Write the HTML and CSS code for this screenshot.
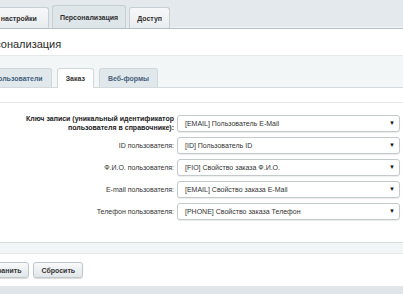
FILE: index.html
```html
<!DOCTYPE html>
<html lang="ru">
<head>
    <meta charset="UTF-8">
    <title>Персонализация</title>
    <link rel="stylesheet" href="styles.css">
</head>
<body>

    <!-- Top tabs -->
    <div class="top-tabs">
        <div class="tab">Общие настройки</div>
        <div class="tab active">Персонализация</div>
        <div class="tab">Доступ</div>
    </div>

    <div class="title-row">
        <h1>Персонализация</h1>
    </div>

    <!-- Sub tabs -->
    <div class="subtabs">
        <div class="subtab">Пользователи</div>
        <div class="subtab active">Заказ</div>
        <div class="subtab">Веб-формы</div>
    </div>

    <div class="content">
        <div class="form">
            <label class="bold">Ключ записи (уникальный идентификатор<br>пользователя в справочнике):</label>
            <div class="select">[EMAIL] Пользователь E-Mail</div>

            <label>ID пользователя:</label>
            <div class="select">[ID] Пользователь ID</div>

            <label>Ф.И.О. пользователя:</label>
            <div class="select">[FIO] Свойство заказа Ф.И.О.</div>

            <label>E-mail пользователя:</label>
            <div class="select">[EMAIL] Свойство заказа E-Mail</div>

            <label>Телефон пользователя:</label>
            <div class="select">[PHONE] Свойство заказа Телефон</div>
        </div>
    </div>

    <div class="footer-band"></div>

    <div class="buttons">
        <button type="button">Сохранить</button>
        <button type="button">Сбросить</button>
    </div>

    <div class="bottom-bar"></div>

</body>
</html>
```

FILE: styles.css
```css
body {
    margin: 0;
    width: 403px;
    height: 294px;
    overflow: hidden;
    font-family: "Liberation Sans", Arial, sans-serif;
    color: #333;
    background-color: #fff;
}

/* Top tabs */
.top-tabs {
    height: 29px;
    box-sizing: border-box;
    display: flex;
    align-items: flex-end;
    gap: 3px;
    background-color: #e3e9ec;
    border-bottom: 1px solid #b5c0c6;
    box-shadow: inset 0 -1px 0 #eef2f4;
}

.tab {
    height: 21px;
    box-sizing: border-box;
    display: flex;
    align-items: center;
    padding: 0 7px;
    border: 1px solid #c6cfd3;
    border-bottom: none;
    border-radius: 3px 3px 0 0;
    background: linear-gradient(#f6f7f8, #e9edef);
    font-size: 7px;
    font-weight: bold;
    color: #2f2f2f;
    white-space: nowrap;
}

.tab:first-child {
    margin-left: -33px;
    padding-right: 11px;
}

.tab.active {
    height: 23px;
    background: #dfe6e9;
}

.title-row {
    height: 27px;
    box-sizing: border-box;
    display: flex;
    align-items: center;
    padding-top: 3px;
    border-bottom: 1px solid #e6e9ea;
}

h1 {
    margin: 0 0 0 -25px;
    font-size: 11px;
    font-weight: normal;
    color: #2b2b2b;
    white-space: nowrap;
}

/* Sub tabs */
.subtabs {
    height: 32px;
    box-sizing: border-box;
    display: flex;
    align-items: flex-end;
    gap: 5px;
    background-color: #f3f6f7;
    border-bottom: 1px solid #d3d9dc;
}

.subtab {
    height: 19px;
    box-sizing: border-box;
    display: flex;
    align-items: center;
    padding: 0 8px;
    border: 1px solid #d0d8dc;
    border-bottom: none;
    border-radius: 3px 3px 0 0;
    background-color: #e1e8eb;
    font-size: 7px;
    font-weight: bold;
    color: #46627e;
    white-space: nowrap;
}

.subtab:first-child {
    margin-left: -16px;
}

.subtab.active {
    height: 20px;
    margin-bottom: -1px;
    background-color: #fff;
    color: #333;
}

/* Form */
.content {
    padding-top: 14px;
}

.form {
    display: grid;
    grid-template-columns: 174px 1fr;
    column-gap: 3px;
    row-gap: 5px;
    align-items: center;
    padding: 11px 3px 22px 0;
    border-top: 1px solid #e6e9ea;
}

.form label {
    text-align: right;
    font-size: 7px;
    line-height: 9px;
    color: #333;
}

.form label.bold {
    font-weight: bold;
    color: #222;
}

.select {
    position: relative;
    height: 17px;
    box-sizing: border-box;
    display: flex;
    align-items: center;
    padding-left: 7px;
    border: 1px solid #c4c9cc;
    border-radius: 3px;
    background-color: #fff;
    box-shadow: 0 1px 1px rgba(0, 0, 0, 0.08);
    font-size: 7px;
    color: #333;
    white-space: nowrap;
}

.select::after {
    content: "▼";
    position: absolute;
    right: 4px;
    top: 4px;
    font-size: 6px;
    color: #111;
}

/* Footer */
.footer-band {
    height: 12px;
    box-sizing: border-box;
    background-color: #f2f5f6;
    border-top: 1px solid #d6dcdf;
    border-bottom: 1px solid #e6eaec;
}

.buttons {
    display: flex;
    gap: 4px;
    padding: 8px 0;
}

.buttons button {
    height: 16px;
    padding: 0 7px;
    border: 1px solid #bfc7cb;
    border-radius: 3px;
    background: linear-gradient(#f8f9fa, #e1e6e9);
    box-shadow: 0 1px 1px rgba(0, 0, 0, 0.15);
    font-family: "Liberation Sans", Arial, sans-serif;
    font-size: 7px;
    font-weight: bold;
    color: #333;
}

.buttons button:first-child {
    margin-left: -24px;
}

.bottom-bar {
    height: 10px;
    background-color: #dfe5e8;
}
```
